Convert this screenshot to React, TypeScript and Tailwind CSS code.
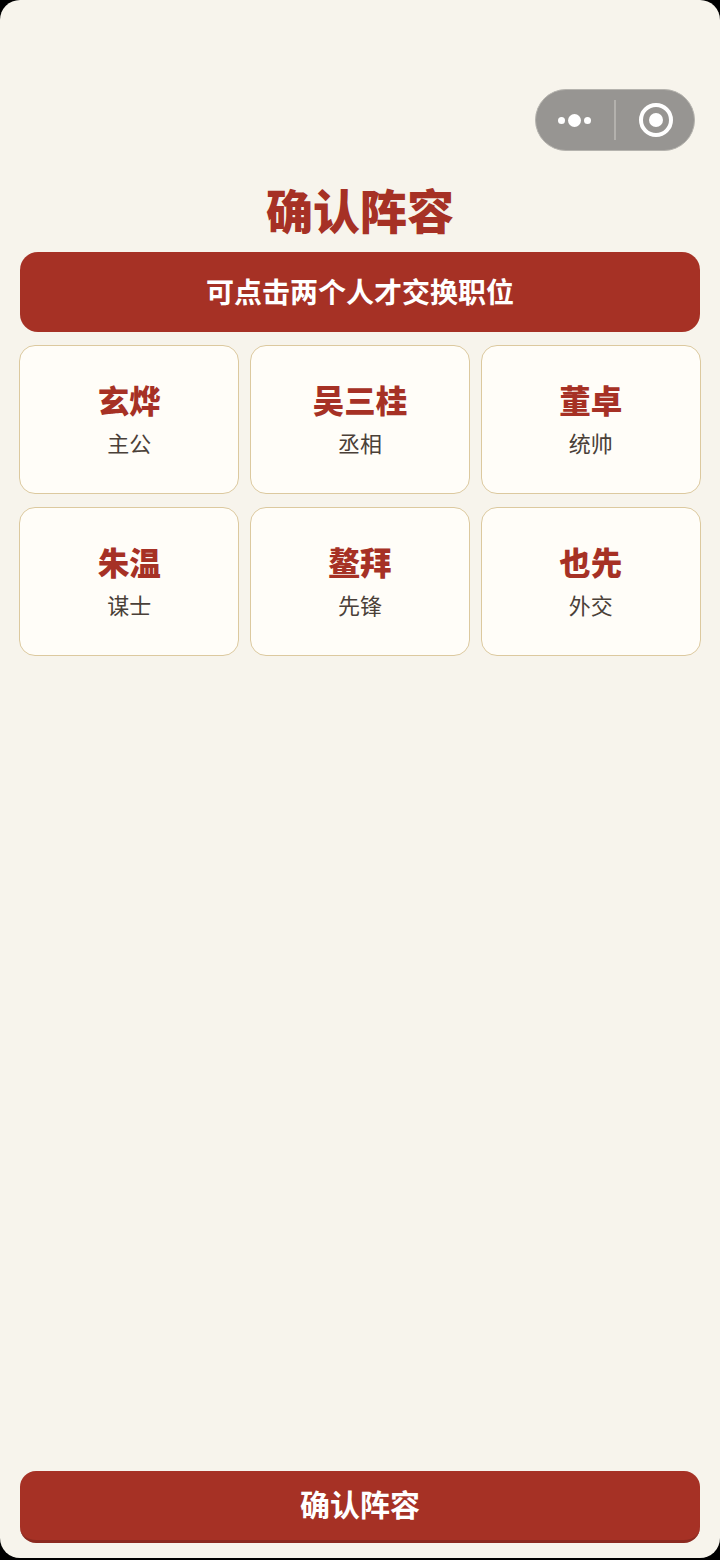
const FONT = "font-['Noto_Sans_CJK_SC',sans-serif]";

const cards = [
  ["玄烨", "主公"],
  ["吴三桂", "丞相"],
  ["董卓", "统帅"],
  ["朱温", "谋士"],
  ["鳌拜", "先锋"],
  ["也先", "外交"],
];

export default function App() {
  return (
    <div className="w-[720px] h-[1560px] bg-black overflow-hidden">
      <div className={`relative w-[720px] h-[1558px] bg-[#f7f4ec] rounded-[20px] flex flex-col px-5 ${FONT}`}>
        <div className="absolute left-[535px] top-[89px] w-[160px] h-[62px] rounded-full bg-[#979592] border border-[#b5b3ae] flex items-center">
          <div className="w-[76px] flex items-center justify-center gap-[3px]">
            <span className="w-[7px] h-[7px] rounded-full bg-white" />
            <span className="w-[13px] h-[13px] rounded-full bg-white" />
            <span className="w-[7px] h-[7px] rounded-full bg-white" />
          </div>
          <div className="ml-[2px] w-[2px] h-[40px] bg-[#b3b1ad]" />
          <div className="flex-1 pl-[2px] flex items-center justify-center">
            <div className="w-[34px] h-[34px] rounded-full border-[4px] border-white flex items-center justify-center">
              <div className="w-[14px] h-[14px] rounded-full bg-white" />
            </div>
          </div>
        </div>

        <h1 className="mt-[175px] h-[66px] shrink-0 flex items-center justify-center text-[47px] font-black text-[#a63125] leading-none">确认阵容</h1>

        <div className="mt-[11px] h-[80px] shrink-0 rounded-[18px] bg-[#a63125] flex items-center justify-center pb-[2px] text-[28px] font-bold text-white">可点击两个人才交换职位</div>

        <div className="-ml-[1px] mt-[13px] w-[683px] grid grid-cols-[220.4px_220.4px_220.4px] gap-x-[10.4px] gap-y-[13.5px]">
          {cards.map(([name, role]) => (
            <div key={name} className="h-[148.5px] rounded-[16px] border border-[#dcc99f] bg-[#fffdf8] flex flex-col items-center justify-center">
              <div className="text-[31.5px] leading-[40px] font-black text-[#a63125] -translate-y-[1px]">{name}</div>
              <div className="mt-[5px] text-[22px] leading-[34px] text-[#4a4038]">{role}</div>
            </div>
          ))}
        </div>

        <div className="mt-auto mb-[15px] h-[72px] shrink-0 rounded-[16px] bg-[#a63125] border-b-[3px] border-[#8c2a20] flex items-center justify-center pb-[4px] text-[30px] font-bold text-white">确认阵容</div>
      </div>
    </div>
  );
}
